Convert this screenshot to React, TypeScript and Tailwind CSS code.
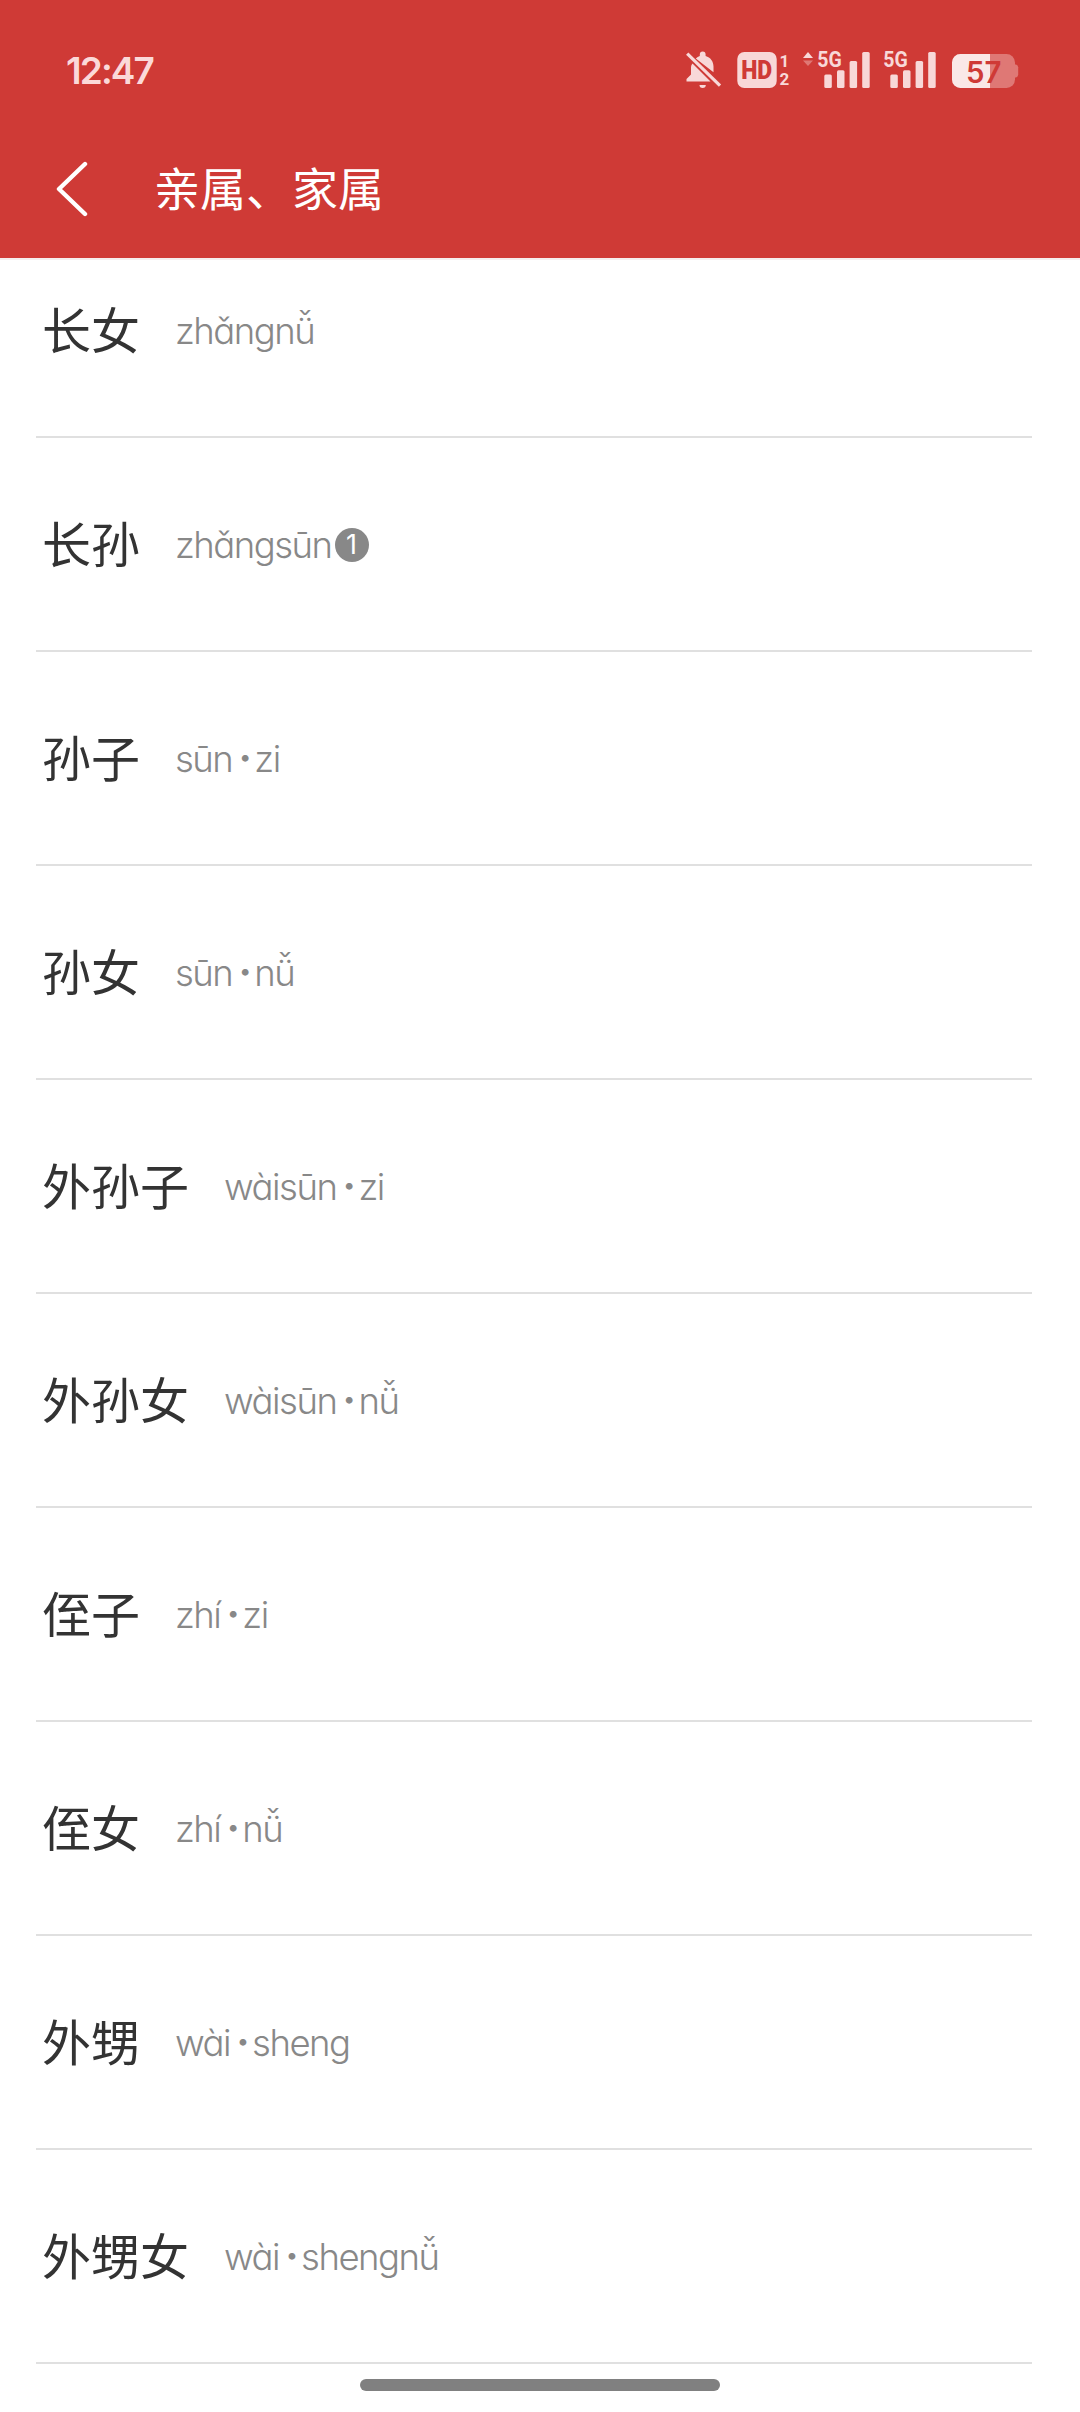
import React from 'react';

interface Word {
  hanzi: string;
  pinyin: string[];
  sense?: number;
}

// pinyin parts are joined with a neutral-tone dot
const words: Word[] = [
  { hanzi: '长女', pinyin: ['zhǎngnǚ'] },
  { hanzi: '长孙', pinyin: ['zhǎngsūn'], sense: 1 },
  { hanzi: '孙子', pinyin: ['sūn', 'zi'] },
  { hanzi: '孙女', pinyin: ['sūn', 'nǚ'] },
  { hanzi: '外孙子', pinyin: ['wàisūn', 'zi'] },
  { hanzi: '外孙女', pinyin: ['wàisūn', 'nǚ'] },
  { hanzi: '侄子', pinyin: ['zhí', 'zi'] },
  { hanzi: '侄女', pinyin: ['zhí', 'nǚ'] },
  { hanzi: '外甥', pinyin: ['wài', 'sheng'] },
  { hanzi: '外甥女', pinyin: ['wài', 'shengnǚ'] },
];

const BellOff: React.FC = () => (
  <svg width="36" height="38" viewBox="0 0 36 38" fill="#f8d8d8">
    <path d="M6.5 12.5L24.5 30.5H0.5V28L5 23.5V16.5C5 15 5.5 13.6 6.5 12.5Z" />
    <path d="M9.8 7.6C11 6.4 12.3 5.5 13.8 5V3.5A2.9 2.9 0 0 1 19.6 3.5V5C24.5 6.4 27.5 10.5 27.5 15.5V21.2Z" />
    <path d="M13.5 34H19.8A3.1 3 0 0 1 13.5 34Z" />
    <path d="M1.2 2.6L34 34.6" stroke="#f8d8d8" strokeWidth="3.2" />
  </svg>
);

const HdBadge: React.FC = () => (
  <svg className="overflow-visible" width="53" height="38" viewBox="0 0 53 38" fontFamily="Roboto, sans-serif" fontWeight="700">
    <rect x="0.3" y="1" width="39.4" height="36" rx="7" fill="#f8d8d8" />
    <text x="4.2" y="28.3" fontSize="26" fontWeight="900" fill="#cf3a36" textLength="31" lengthAdjust="spacingAndGlyphs">HD</text>
    <text x="42.5" y="16.3" fontSize="17" fill="#f8d8d8">1</text>
    <text x="42.5" y="34" fontSize="17" fill="#f8d8d8">2</text>
  </svg>
);

const Signal: React.FC = () => (
  <svg className="overflow-visible" width="54" height="38" viewBox="0 0 54 38" fill="#f8d8d8">
    <text x="-0.8" y="16" fontSize="22.5" fontWeight="700" fontFamily="Roboto, sans-serif" textLength="24.5" lengthAdjust="spacingAndGlyphs">5G</text>
    <rect x="6.3" y="23.5" width="7.5" height="13.5" rx="1.5" />
    <rect x="19" y="19.2" width="7.5" height="17.8" rx="1.5" />
    <rect x="31.6" y="10" width="7.5" height="27" rx="1.5" />
    <rect x="44.2" y="1" width="7.5" height="36" rx="1.5" />
  </svg>
);

const Battery: React.FC = () => (
  <svg width="67" height="38" viewBox="0 0 67 38">
    <rect x="0" y="3" width="63" height="34" rx="8.5" fill="#df7875" />
    <path d="M63 13.5h1a3 3 0 0 1 2.2 2.7v7.6a3 3 0 0 1 -2.2 2.7h-1z" fill="#df7875" />
    <path d="M8.5 3H38v34H8.5A8.5 8.5 0 0 1 0 28.5v-17A8.5 8.5 0 0 1 8.5 3z" fill="#fae8e7" />
    <text x="14" y="31.5" fontSize="30" fontWeight="600" fontFamily="Inter, sans-serif" fill="#cf3a36" textLength="35.5" lengthAdjust="spacingAndGlyphs">57</text>
  </svg>
);

const StatusBar: React.FC = () => (
  <div className="flex items-center h-[142px] pl-[66px] pr-[61px]">
    <span className="font-['Inter',sans-serif] text-[37px] font-semibold tracking-[-1.9px] text-[#fbd9d9]">12:47</span>
    <div className="ml-auto flex pb-0.5">
      <BellOff />
      <div className="ml-[15px]">
        <HdBadge />
      </div>
      <svg className="ml-[13px]" width="10" height="38" viewBox="0 0 10 38">
        <path d="M5 1L10 7H0Z" fill="#f8d8d8" />
        <path d="M0 9.5H10L5 15Z" fill="#df7875" />
      </svg>
      <div className="ml-[5px]">
        <Signal />
      </div>
      <div className="ml-3">
        <Signal />
      </div>
      <div className="ml-[14px]">
        <Battery />
      </div>
    </div>
  </div>
);

const WordRow: React.FC<{ word: Word }> = ({ word }) => (
  <li className="flex items-center h-[214px] ml-9 mr-12 pl-1.5 border-b-2 border-[#e0e0e0]">
    <span className="pb-1.5 text-[49px] leading-none text-[#333333]">{word.hanzi}</span>
    <span className="ml-[35px] flex items-center pt-0.5 font-['Inter','Noto_Sans_CJK_SC',sans-serif] text-[36.5px] font-light leading-none tracking-[-1.5px] text-[#888888] [font-feature-settings:'cv11']">
      {word.pinyin.map((part, idx) => (
        <React.Fragment key={part}>
          {idx > 0 && <span className="w-[22px] pb-0.5 pl-0.5 text-center font-extrabold">·</span>}
          <span>{part}</span>
        </React.Fragment>
      ))}
      {word.sense && (
        <span className="mb-px ml-[3px] flex size-[34px] items-center justify-center rounded-full bg-[#888888] text-[27px] font-normal tracking-normal text-white">
          {word.sense}
        </span>
      )}
    </span>
  </li>
);

const App: React.FC = () => {
  return (
    <div lang="zh-CN" className="relative h-[2412px] w-[1080px] overflow-hidden bg-white font-['Noto_Sans_CJK_SC',sans-serif]">
      <header className="h-[258px] bg-[#cf3a36]">
        <StatusBar />
        <div className="flex items-center h-[94px] pl-[56px]">
          <svg width="32" height="56" viewBox="0 0 32 56" fill="none" stroke="white" strokeWidth="4.4" strokeLinecap="round" strokeLinejoin="round">
            <path d="M29 3L3 28L29 53" />
          </svg>
          <h1 className="ml-[66px] pb-[6px] text-[46px] leading-none text-white">亲属、家属</h1>
        </div>
      </header>

      <main className="overflow-hidden border-t-2 border-[#f6eeee]">
        <ul className="-mt-9">
          {words.map((word) => (
            <WordRow key={word.hanzi} word={word} />
          ))}
        </ul>
      </main>

      <div className="absolute bottom-[21px] left-[360px] h-3 w-[360px] rounded-full bg-[#808080]" />
    </div>
  );
};

export default App;
